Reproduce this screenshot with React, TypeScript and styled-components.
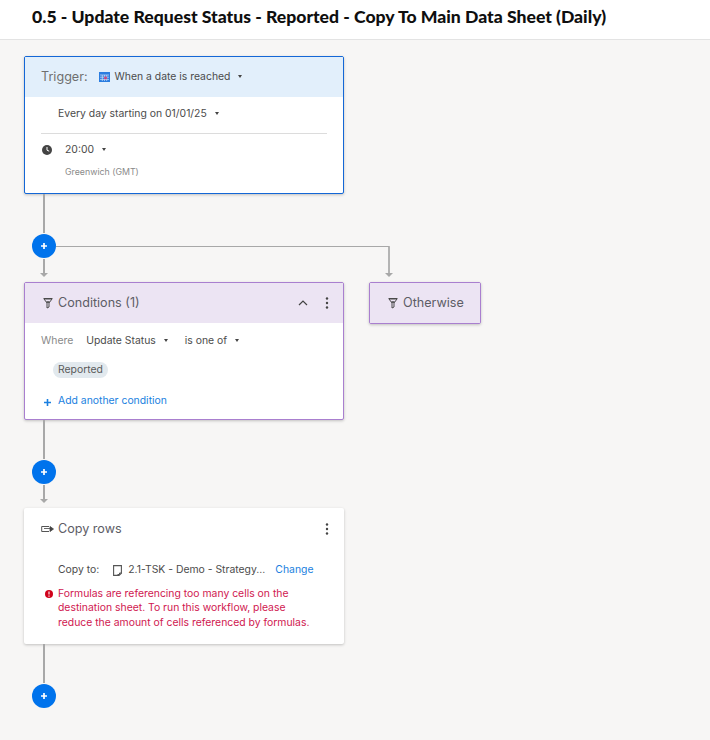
import React from "react";
import styled, { createGlobalStyle } from "styled-components";

const Global = createGlobalStyle`
  html, body { margin: 0; padding: 0; background: #f7f6f5; }
  * { box-sizing: border-box; }
  body { font-family: Inter, "Liberation Sans", sans-serif; color: #444; }
`;

const Page = styled.div`
  width: 710px;
  height: 740px;
  overflow: hidden;
  background: #f7f6f5;
`;
const Header = styled.header`
  height: 40px;
  background: #fff;
  border-bottom: 1px solid #e3e3e3;
  padding: 0 0 0 32px;
  display: flex;
  align-items: center;
`;
const Title = styled.h1`
  margin: 0 0 5px;
  font: 900 17.6px/22px Lato, "Liberation Sans", sans-serif;
  color: #0f0f0f;
  white-space: nowrap;
`;
const Canvas = styled.main`
  padding: 16px 0 0 24px;
  display: flex;
  flex-direction: column;
  align-items: flex-start;
`;
const Card = styled.section<{ $border?: string; $width?: number }>`
  width: ${(p) => p.$width ?? 320}px;
  background: #fff;
  border-radius: 2px;
  border: ${(p) => (p.$border ? `1px solid ${p.$border}` : "0")};
  box-shadow: 0 1px 3px rgba(0, 0, 0, 0.22);
  overflow: hidden;
`;
const CardHead = styled.div<{ $bg: string; $pad?: string; $h: number }>`
  height: ${(p) => p.$h}px;
  background: ${(p) => p.$bg};
  padding: ${(p) => p.$pad ?? "0 16px"};
  display: flex;
  align-items: center;
`;
const TriggerLabel = styled.span`
  font-size: 12.6px;
  color: #6f6f6f;
  margin-right: 11px;
  margin-bottom: 1px;
`;
const Small = styled.span<{ $color?: string }>`
  font-size: 10.4px;
  line-height: 14px;
  color: ${(p) => p.$color ?? "#4b4b4b"};
  white-space: nowrap;
`;
const Caret = styled.i`
  display: inline-block;
  width: 0;
  height: 0;
  border-left: 2.5px solid transparent;
  border-right: 2.5px solid transparent;
  border-top: 3px solid #444;
  margin-left: 8px;
  vertical-align: 2px;
`;
const TriggerBody = styled.div`
  padding: 8px 16px 0;
  height: 96px;
`;
const DateRow = styled.div`
  padding-left: 17px;
  height: 18px;
  display: flex;
  align-items: center;
`;
const Divider = styled.hr`
  border: 0;
  border-top: 1px solid #dcdcdc;
  margin: 10px 0 0;
`;
const TimeRow = styled.div`
  display: flex;
  align-items: center;
  height: 16px;
  margin-top: 8px;
`;
const TimeText = styled(Small)`
  margin-left: 13px;
`;
const Zone = styled.div`
  font-size: 8.8px;
  line-height: 12px;
  color: #8a8a8a;
  margin: 8px 0 0 24px;
`;
const Row = styled.div`
  display: flex;
  align-items: flex-start;
  gap: 25px;
`;
const HeadTitle = styled.span`
  font-size: 12.6px;
  color: #5d5d66;
  margin-left: 5px;
  margin-bottom: 1px;
`;
const Push = styled.div`
  margin-left: auto;
  display: flex;
  align-items: center;
  gap: 12px;
`;
const CondBody = styled.div`
  padding: 10px 16px 0;
  height: 96px;
`;
const WhereRow = styled.div`
  display: flex;
  align-items: center;
  height: 16px;
`;
const Chip = styled.span`
  display: inline-block;
  margin: 13px 0 0 12px;
  padding: 0 5px;
  height: 16px;
  line-height: 15px;
  border-radius: 8px;
  background: #e2e9ee;
  color: #5a5a5a;
  font-size: 10.4px;
`;
const AddRow = styled.div`
  display: flex;
  align-items: center;
  margin-top: 16px;
  height: 14px;
  gap: 7px;
  padding-left: 3px;
`;
const CopyHead = styled.div`
  height: 42px;
  padding: 0 15px 0 17px;
  display: flex;
  align-items: center;
`;
const CopyBody = styled.div`
  padding: 12px 16px 0 34px;
  height: 94px;
`;
const CopyRow = styled.div`
  display: flex;
  align-items: center;
  height: 16px;
`;
const ErrorBlock = styled.div`
  display: flex;
  margin: 9px 0 0 -13px;
  gap: 5px;
`;
const ErrorText = styled.p`
  margin: 0;
  font-size: 10.4px;
  line-height: 14.4px;
  color: #d0174f;
  white-space: nowrap;
`;

const Connector = styled.div<{ $h: number }>`
  height: ${(p) => p.$h}px;
  display: block;
  line-height: 0;
`;

const Line = "#a8a8a8";

function AddButton({ cy }: { cy: number }) {
  return (
    <g>
      <circle cx={20} cy={cy} r={12} fill="#0073ec" />
      <path d={`M20 ${cy - 3}v6M17 ${cy}h6`} stroke="#fff" strokeWidth={1.7} />
    </g>
  );
}

function Arrow({ x, y }: { x: number; y: number }) {
  return <path d={`M${x - 4} ${y}h8l-4 4z`} fill={Line} />;
}

const Funnel = () => (
  <svg width="10" height="12" viewBox="0 0 10 12">
    <path d="M.5 1.5h9" stroke="#4a4a4a" strokeWidth="1.2" />
    <path d="M1 2l3 4v5l2-1V6l3-4z" fill="none" stroke="#4a4a4a" strokeWidth="1" />
    <path d="M3.2 4.2h3.6L5.6 6H4.4z" fill="#4a4a4a" />
  </svg>
);

const Kebab = () => (
  <svg width="4" height="12" viewBox="0 0 4 12">
    <circle cx="2" cy="1.5" r="1.2" fill="#444" />
    <circle cx="2" cy="6" r="1.2" fill="#444" />
    <circle cx="2" cy="10.5" r="1.2" fill="#444" />
  </svg>
);

export default function App() {
  return (
    <Page>
      <Global />
      <Header>
        <Title>0.5 - Update Request Status - Reported - Copy To Main Data Sheet (Daily)</Title>
      </Header>
      <Canvas>
        <Card $border="#1467d6">
          <CardHead $bg="#e2effb" $h={40}>
            <TriggerLabel>Trigger:</TriggerLabel>
            <svg width="11" height="10" viewBox="0 0 11 10" style={{ marginRight: 5 }}>
              <rect width="11" height="10" fill="#2b7de0" />
              <path d="M1 3h9M1 5.2h9M1 7.4h9M3.3 3v6M5.5 3v6M7.7 3v6" stroke="#d4e4f8" strokeWidth=".7" />
              <rect x="5" y="4.6" width="3" height="2.6" fill="#d2386f" opacity=".8" />
            </svg>
            <Small>When a date is reached<Caret /></Small>
          </CardHead>
          <TriggerBody>
            <DateRow>
              <Small>Every day starting on 01/01/25<Caret /></Small>
            </DateRow>
            <Divider />
            <TimeRow>
              <svg width="10" height="10" viewBox="0 0 10 10" style={{ marginLeft: 1 }}>
                <circle cx="5" cy="5" r="5" fill="#444" />
                <path d="M5 2v3.2l2.2 1" fill="none" stroke="#fff" strokeWidth="1" />
              </svg>
              <TimeText>20:00<Caret /></TimeText>
            </TimeRow>
            <Zone>Greenwich (GMT)</Zone>
          </TriggerBody>
        </Card>
        <Connector $h={88}>
          <svg width="400" height="88" viewBox="0 0 400 88">
            <path d="M20 0v39M20 65v17" stroke={Line} strokeWidth="2" fill="none" />
            <path d="M32 52.5h333v27" stroke={Line} strokeWidth="1" fill="none" />
            <path d="M365 52v28" stroke={Line} strokeWidth="1.4" fill="none" />
            <Arrow x={20} y={79} />
            <Arrow x={365} y={79} />
            <AddButton cy={52} />
          </svg>
        </Connector>
        <Row>
          <Card $border="#a97fcf">
            <CardHead $bg="#ece4f3" $h={40} $pad="0 14px 0 18px">
              <Funnel />
              <HeadTitle>Conditions (1)</HeadTitle>
              <Push>
                <svg width="10" height="6" viewBox="0 0 10 6" style={{ marginRight: 5 }}>
                  <path d="M1 5l4-4 4 4" fill="none" stroke="#444" strokeWidth="1.2" />
                </svg>
                <Kebab />
              </Push>
            </CardHead>
            <CondBody>
              <WhereRow>
                <Small $color="#8a8a8a">Where</Small>
                <Small style={{ marginLeft: 13 }}>Update Status<Caret /></Small>
                <Small style={{ marginLeft: 17 }}>is one of<Caret /></Small>
              </WhereRow>
              <Chip>Reported</Chip>
              <AddRow>
                <svg width="7" height="7" viewBox="0 0 7 7" style={{ marginTop: 2 }}>
                  <path d="M3.5 0v7M0 3.5h7" stroke="#1a7fe0" strokeWidth="1.6" />
                </svg>
                <Small $color="#1a7fe0">Add another condition</Small>
              </AddRow>
            </CondBody>
          </Card>
          <Card $border="#a97fcf" $width={112}>
            <CardHead $bg="#ece4f3" $h={40} $pad="0 0 0 18px">
              <Funnel />
              <HeadTitle>Otherwise</HeadTitle>
            </CardHead>
          </Card>
        </Row>
        <Connector $h={88}>
          <svg width="400" height="88" viewBox="0 0 400 88">
            <path d="M20 0v39M20 65v15" stroke={Line} strokeWidth="2" fill="none" />
            <Arrow x={20} y={79} />
            <AddButton cy={52} />
          </svg>
        </Connector>
        <Card>
          <CopyHead>
            <svg width="13" height="9" viewBox="0 0 13 9" style={{ marginRight: 4 }}>
              <path d="M8 1.5H.7v5H8" fill="none" stroke="#555" strokeWidth="1" />
              <path d="M3 3.5h7M9 1.5l3.5 2.5L9 6.5z" fill="#444" stroke="#444" strokeWidth=".8" />
            </svg>
            <HeadTitle style={{ marginLeft: 0 }}>Copy rows</HeadTitle>
            <Push><Kebab /></Push>
          </CopyHead>
          <CopyBody>
            <CopyRow>
              <Small>Copy to:</Small>
              <svg width="9" height="11" viewBox="0 0 9 11" style={{ margin: "0 6px 0 14px" }}>
                <path d="M.6.6h7.8v7.6L6 10.4H.6z" fill="none" stroke="#555" strokeWidth="1.1" />
                <path d="M4.5 9.5h2v-1.5h2" fill="none" stroke="#555" strokeWidth="1" />
              </svg>
              <Small>2.1-TSK - Demo - Strategy...</Small>
              <Small $color="#1a7fe0" style={{ marginLeft: 10 }}>Change</Small>
            </CopyRow>
            <ErrorBlock>
              <svg width="8" height="8" viewBox="0 0 8 8" style={{ marginTop: 3, flex: "none" }}>
                <circle cx="4" cy="4" r="4" fill="#d0021b" />
                <path d="M4 1.5v3M4 5.5v1.2" stroke="#fff" strokeWidth="1.1" />
              </svg>
              <ErrorText>
                Formulas are referencing too many cells on the<br />
                destination sheet. To run this workflow, please<br />
                reduce the amount of cells referenced by formulas.
              </ErrorText>
            </ErrorBlock>
          </CopyBody>
        </Card>
        <Connector $h={64}>
          <svg width="400" height="64" viewBox="0 0 400 64">
            <path d="M20 0v39" stroke={Line} strokeWidth="2" fill="none" />
            <AddButton cy={52} />
          </svg>
        </Connector>
      </Canvas>
    </Page>
  );
}
